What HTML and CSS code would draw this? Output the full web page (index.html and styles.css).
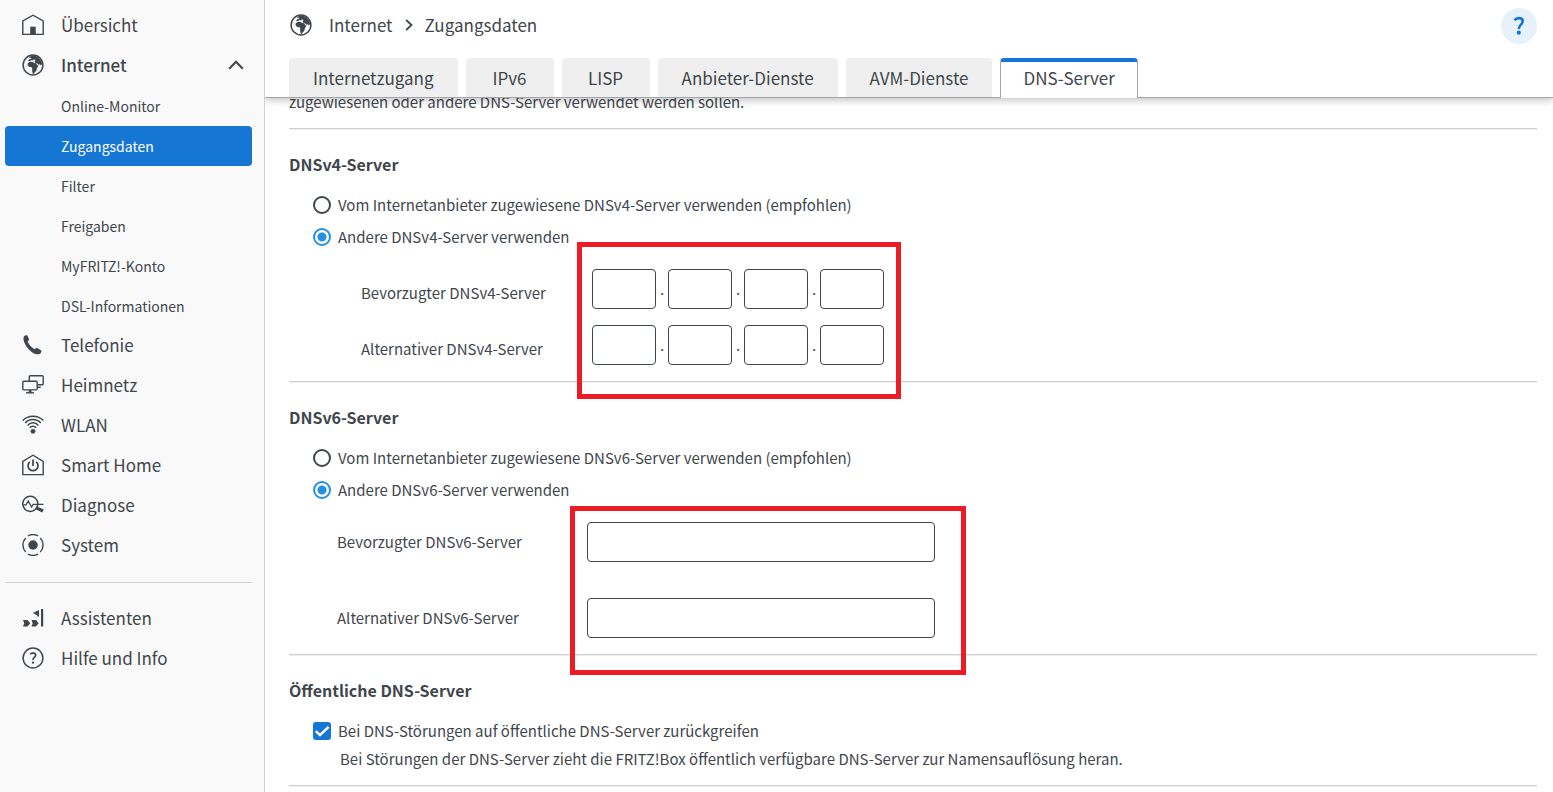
FILE: index.html
```html
<!DOCTYPE html>
<html lang="de">
<head>
<meta charset="utf-8">
<title>FRITZ!Box – Zugangsdaten</title>
<link rel="stylesheet" href="styles.css">
</head>
<body>
<svg class="sprite" aria-hidden="true">
  <symbol id="globe" viewBox="0 0 22 22">
    <circle cx="11" cy="11" r="9.9" fill="none" stroke="currentColor" stroke-width="1.5"/>
    <path fill="currentColor" d="M6.5 3.6 10 1.6l3.2.2 3.6 2 2.7 3.6.6 2.7-1.3 1.4-1.2-1.2-1.2.5-1-1.4-1.9-.5-1-1.7 1.2-1.3-1.8-.3-1.4 1-1.1-.4-1.9.7-1.7-.3 1.5-1.3 2.2-.8-.4-.5z"/>
    <path fill="currentColor" d="M5.7 9.3 8 7.8l2.8.1 1.3 1 2 .3 1.2 2 1.3.3-1.9 3-.2 2.1-1.8 2-.9 1.4-1.1-.3-.6-3.2.2-2-1-1.6-2 .1-1.6-1.6z"/>
  </symbol>
</svg>
<div class="app">
  <nav class="sidebar">
    <ul class="menu">
      <li><a class="item" href="#"><svg class="icon" viewBox="0 0 22 22"><path d="M.8 20.4V7L11 1.2 21.2 7v13.4z" fill="none" stroke="currentColor" stroke-width="1.4"/><path d="M8.2 12.7h5.5v7.7H8.2z" fill="currentColor"/></svg>Übersicht</a></li>
      <li><a class="item item-open" href="#"><svg class="icon"><use href="#globe"/></svg>Internet<svg class="chevron" viewBox="0 0 16 10"><path d="M1.2 8.8 8 1.8l6.8 7" fill="none" stroke="currentColor" stroke-width="2"/></svg></a>
        <ul class="menu">
          <li><a class="subitem" href="#">Online-Monitor</a></li>
          <li><a class="subitem subitem-active" href="#">Zugangsdaten</a></li>
          <li><a class="subitem" href="#">Filter</a></li>
          <li><a class="subitem" href="#">Freigaben</a></li>
          <li><a class="subitem" href="#">MyFRITZ!-Konto</a></li>
          <li><a class="subitem" href="#">DSL-Informationen</a></li>
        </ul>
      </li>
      <li><a class="item" href="#"><svg class="icon" viewBox="0 0 22 22"><path d="M1.8 2.7C2.8 1.3 4.6.9 5.3 1.5L7 5c.3.8-.2 1.6-1.4 2.3 1.2 3.4 4 6.3 7.2 8 .9-1.200 1.900-1.500 2.700-1.100l3.500 2.100c.9.700.5 2.300-1 3.400-1.700 1.200-4.700.7-7.700-1.300C6.200 15.500 1.800 9.500 1.500 5.200 1.400 4.200 1.500 3.400 1.800 2.700z" fill="currentColor"/></svg>Telefonie</a></li>
      <li><a class="item" href="#"><svg class="icon" viewBox="0 0 22 22"><g fill="none" stroke="currentColor" stroke-width="1.4"><path d="M7.3 7V2.700q0-1 1-1H20.200q1 0 1 1V9.800q0 1-1 1H15.500M15.500 13.300h3.200"/><rect x=".8" y="7.300" width="14.400" height="8.600" rx="1"/><path d="M4 18.800h8"/></g><path d="M6.800 16h2.600v2.800H6.800z" fill="currentColor"/></svg>Heimnetz</a></li>
      <li><a class="item" href="#"><svg class="icon" viewBox="0 0 22 22"><g fill="none" stroke="currentColor" stroke-width="1.500"><path d="M.7 6.600C6 .7 16 .7 21.300 6.600M3.200 9C7.300 4.400 14.700 4.400 18.800 9M5.600 11.400C8.600 8 13.400 8 16.400 11.400M7.800 13.700C9.600 11.600 12.400 11.600 14.200 13.700"/></g><circle cx="11" cy="17.300" r="2.400" fill="currentColor"/></svg>WLAN</a></li>
      <li><a class="item" href="#"><svg class="icon" viewBox="0 0 22 22"><g fill="none" stroke="currentColor"><path d="M.8 20.600V7.300L11 1.200 21.200 7.300v13.300z" stroke-width="1.400"/><path d="M11 5.500v6.500M7.800 7.800a5 5 0 1 0 6.400 0" stroke-width="1.700"/></g></svg>Smart Home</a></li>
      <li><a class="item" href="#"><svg class="icon" viewBox="0 0 22 22"><g fill="none" stroke="currentColor" stroke-width="1.500"><circle cx="8.300" cy="9.800" r="7.600"/><path d="M1.300 10.800H4L6.300 7l3.200 6 1.700-2.700H21.500" stroke-width="1.300"/><path d="M13.800 13.600 21 17" stroke-width="3.200"/></g></svg>Diagnose</a></li>
      <li><a class="item" href="#"><svg class="icon" viewBox="0 0 22 22"><circle cx="11" cy="11" r="4.700" fill="currentColor"/><path d="M6 1.900A10.400 10.400 0 0 1 16 1.900M18.300 4a10.200 10.200 0 0 1 0 14M16 20.100A10.400 10.400 0 0 1 6 20.100M3.700 18a10.200 10.200 0 0 1 0-14" fill="none" stroke="currentColor" stroke-width="1.400"/></svg>System</a></li>
    </ul>
    <ul class="menu menu-secondary">
      <li><a class="item" href="#"><svg class="icon" viewBox="0 0 22 22"><path d="M19 2h2.200v17.500H19zM10.800 6 17 3v6.500H15.200V8.300zM1 13h4.500L8.300 16.300 5.500 19.500H1L2.200 16.300zM9.500 13H14l2.700 3.300L14 19.500H9.500l1.200-3.200z" fill="currentColor"/></svg>Assistenten</a></li>
      <li><a class="item" href="#"><svg class="icon" viewBox="0 0 22 22"><g fill="none" stroke="currentColor"><circle cx="11" cy="11" r="9.900" stroke-width="1.500"/><path d="M8.200 7.200C9.700 5.500 13.800 5.600 13.700 8.200 13.600 10.200 11 10.400 11 13" stroke-width="1.700"/></g><circle cx="11" cy="15.600" r="1.200" fill="currentColor"/></svg>Hilfe und Info</a></li>
    </ul>
  </nav>

  <main class="main">
    <header class="header">
      <div class="topbar">
        <div class="breadcrumb">
          <svg class="icon"><use href="#globe"/></svg>
          <a class="crumb" href="#">Internet</a>
          <svg class="crumb-sep" viewBox="0 0 8 12"><path d="M1.200 1 6.500 6l-5.300 5" fill="none" stroke="currentColor" stroke-width="1.800"/></svg>
          <a class="crumb" href="#">Zugangsdaten</a>
        </div>
        <button class="help" type="button" aria-label="Hilfe"><svg class="help-mark" viewBox="0 0 12 20"><path d="M1.500 4.200C3.500 1.300 9.900 1.100 9.700 5.500 9.500 8.600 5.800 8.800 5.800 13" fill="none" stroke="currentColor" stroke-width="2.600"/><circle cx="5.800" cy="16.700" r="2.100" fill="currentColor"/></svg></button>
      </div>
      <div class="tabs">
        <a class="tab" href="#">Internetzugang</a>
        <a class="tab" href="#">IPv6</a>
        <a class="tab" href="#">LISP</a>
        <a class="tab" href="#">Anbieter-Dienste</a>
        <a class="tab" href="#">AVM-Dienste</a>
        <a class="tab tab-active" href="#">DNS-Server</a>
      </div>
    </header>

    <form class="content">
      <p class="intro">zugewiesenen oder andere DNS-Server verwendet werden sollen.</p>
      <hr class="rule">

      <section class="section">
        <h2 class="heading">DNSv4-Server</h2>
        <label class="choice"><input class="radio" type="radio" name="v4">Vom Internetanbieter zugewiesene DNSv4-Server verwenden (empfohlen)</label>
        <label class="choice"><input class="radio" type="radio" name="v4" checked>Andere DNSv4-Server verwenden</label>
        <div class="fields fields-v4">
          <label class="field-label" for="v4a">Bevorzugter DNSv4-Server</label>
          <div class="octets">
            <input class="box" id="v4a" type="text"><span class="dot">.</span><input class="box" type="text" aria-label="Oktett 2"><span class="dot">.</span><input class="box" type="text" aria-label="Oktett 3"><span class="dot">.</span><input class="box" type="text" aria-label="Oktett 4">
          </div>
          <label class="field-label" for="v4b">Alternativer DNSv4-Server</label>
          <div class="octets">
            <input class="box" id="v4b" type="text"><span class="dot">.</span><input class="box" type="text" aria-label="Oktett 2"><span class="dot">.</span><input class="box" type="text" aria-label="Oktett 3"><span class="dot">.</span><input class="box" type="text" aria-label="Oktett 4">
          </div>
          <div class="marker marker-v4"></div>
        </div>
      </section>
      <hr class="rule">

      <section class="section">
        <h2 class="heading">DNSv6-Server</h2>
        <label class="choice"><input class="radio" type="radio" name="v6">Vom Internetanbieter zugewiesene DNSv6-Server verwenden (empfohlen)</label>
        <label class="choice"><input class="radio" type="radio" name="v6" checked>Andere DNSv6-Server verwenden</label>
        <div class="fields fields-v6">
          <label class="field-label" for="v6a">Bevorzugter DNSv6-Server</label>
          <input class="box box-wide" id="v6a" type="text">
          <label class="field-label" for="v6b">Alternativer DNSv6-Server</label>
          <input class="box box-wide" id="v6b" type="text">
          <div class="marker marker-v6"></div>
        </div>
      </section>
      <hr class="rule">

      <section class="section section-public">
        <h2 class="heading">Öffentliche DNS-Server</h2>
        <label class="choice"><span class="check-wrap"><input class="check" type="checkbox" checked><svg class="tick" viewBox="0 0 18 18"><path d="M2.800 9.200 7 13.200l8.600-8.400" fill="none" stroke="currentColor" stroke-width="2.400"/></svg></span>Bei DNS-Störungen auf öffentliche DNS-Server zurückgreifen</label>
        <p class="hint">Bei Störungen der DNS-Server zieht die FRITZ!Box öffentlich verfügbare DNS-Server zur Namensauflösung heran.</p>
      </section>
      <hr class="rule">
    </form>
  </main>
</div>
</body>
</html>
```
FILE: styles.css
```css
* { box-sizing: border-box; }

body {
  margin: 0;
  color: #3f464c;
  background: #fff;
  font: 15px/24px "Noto Sans CJK SC", "Noto Sans", sans-serif;
}

a { color: inherit; text-decoration: none; }

.sprite { position: absolute; width: 0; height: 0; }

.app {
  display: grid;
  grid-template-columns: 265px 1fr;
  height: 100vh;
  overflow: hidden;
}

/* Sidebar */
.sidebar {
  padding: 6px 12px 0 5px;
  background: #f9f9f9;
  border-right: 1px solid #d0d0d0;
}

.menu { margin: 0; padding: 0; list-style: none; }

.menu-secondary {
  margin-top: 16px;
  padding-top: 16px;
  border-top: 1px solid #d3d3d3;
}

.item {
  display: flex;
  align-items: center;
  gap: 17px;
  height: 40px;
  padding: 0 8px 2px 17px;
  font-size: 17px;
}

.item-open { font-weight: 500; }

.icon { flex: none; width: 22px; height: 22px; }

.chevron { width: 16px; height: 10px; margin-left: auto; }

.subitem {
  display: flex;
  align-items: center;
  height: 40px;
  padding-left: 56px;
  border-radius: 4px;
  font-size: 14px;
}

.subitem-active { color: #fff; background: #1576d4; }

/* Header */
.main {
  display: flex;
  flex-direction: column;
  min-width: 0;
  overflow: hidden;
}

.header {
  position: relative;
  z-index: 1;
  background: #fff;
  border-bottom: 1px solid #a3a6a8;
  box-shadow: 0 2px 8px rgba(0, 0, 0, 0.25);
}

.topbar {
  display: flex;
  align-items: center;
  justify-content: space-between;
  padding: 8px 16px 14px 25px;
}

.breadcrumb {
  display: flex;
  align-items: center;
  padding-bottom: 2px;
  font-size: 17px;
}

.crumb { margin-left: 17px; }

.crumb-sep { width: 8px; height: 12px; margin-left: 12px; }

.crumb-sep + .crumb { margin-left: 12px; }

.help {
  display: grid;
  place-items: center;
  width: 36px;
  height: 36px;
  padding: 0;
  border: 0;
  border-radius: 50%;
  color: #1576d4;
  background: #e6f1fa;
}

.help-mark { width: 12px; height: 20px; }

.tabs {
  display: flex;
  gap: 8px;
  margin-bottom: -1px;
  padding-left: 24px;
}

.tab {
  display: flex;
  align-items: center;
  justify-content: center;
  min-width: 88px;
  height: 39px;
  padding: 0 24px;
  border-radius: 4px 4px 0 0;
  background: #efefef;
  font-size: 17px;
}

.tab-active {
  height: 40px;
  padding: 0 22px 4px;
  background: #fff;
  border: 1px solid #a3a6a8;
  border-top: 4px solid #1576d4;
  border-bottom: 0;
}

/* Content */
.content { padding: 0 16px 0 24px; }

.intro { margin: -8px 0 14px; }

.rule {
  height: 2px;
  margin: 0;
  border: 0;
  border-top: 1px solid #cfcfcf;
  border-bottom: 1px solid #eee;
}

.section { padding: 22px 0 16px; }

.section-public { padding-bottom: 14px; }

.heading { margin: 0 0 13px; font-size: 16px; font-weight: 700; line-height: 24px; }

.choice {
  display: flex;
  align-items: center;
  gap: 7px;
  width: fit-content;
  height: 32px;
  margin-left: 24px;
}

.radio {
  appearance: none;
  width: 18px;
  height: 18px;
  margin: 0;
  border: 2px solid #3f464c;
  border-radius: 50%;
}

.radio:checked {
  border-color: #2290e3;
  background: radial-gradient(circle, #2290e3 4px, #fff 5px);
}

.check-wrap { display: grid; color: #fff; }

.check, .tick { grid-area: 1 / 1; width: 18px; height: 18px; }

.check {
  appearance: none;
  margin: 0;
  border-radius: 3px;
  background: #1576d4;
}

.hint { margin: 0 0 0 51px; }

.fields {
  position: relative;
  display: grid;
  align-items: center;
  justify-content: start;
  padding-top: 16px;
}

.fields-v4 {
  grid-template-columns: 231px auto;
  row-gap: 16px;
  margin-left: 72px;
}

.fields-v4 .field-label { padding-top: 8px; }

.fields-v6 {
  grid-template-columns: 250px auto;
  row-gap: 36px;
  margin-left: 48px;
}

.octets { display: flex; align-items: center; }

.dot { width: 12px; text-align: center; }

.box {
  width: 64px;
  height: 40px;
  padding: 0 8px;
  border: 1px solid #3f464c;
  border-radius: 4px;
  background: #fff;
  color: inherit;
  font: inherit;
}

.box-wide { width: 348px; }

/* Highlight frames drawn over the input groups */
.marker {
  position: absolute;
  grid-area: 1 / 2 / 3 / 3;
  border: 5px solid #ed1c24;
  pointer-events: none;
}

.marker-v4 { inset: -27px -17px -34px -15px; }

.marker-v6 { inset: -16px -31px -37px -17px; }
```
